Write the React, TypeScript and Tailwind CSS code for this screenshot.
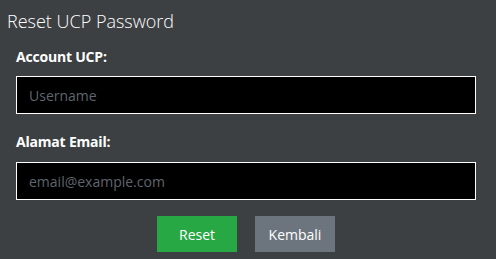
import React from 'react';

const App = () => {
  return (
    <div className="min-h-[259px] w-[496px] bg-[#3d4043] pl-[7px] pr-[20px] pt-[9px] font-['Open_Sans',sans-serif] text-white">
      {/* Header */}
      <h1 className="text-[18px] leading-[24px] font-light">Reset UCP Password</h1>

      <form className="mt-[14px] pl-[9px]" onSubmit={e => e.preventDefault()}>
        <label className="block text-[14px] leading-[20px] font-bold tracking-[-0.2px]">Account UCP:</label>
        <input
          type="text"
          placeholder="Username"
          className="mt-[9px] block h-[38px] w-[460px] border border-white bg-black px-[12px] text-[14px] text-white outline-none placeholder:text-[#5f666d]"
        />

        <label className="mt-[18px] block text-[14px] leading-[20px] font-bold tracking-[-0.2px]">Alamat Email:</label>
        <input
          type="email"
          placeholder="email@example.com"
          className="mt-[10px] block h-[38px] w-[460px] border border-white bg-black px-[12px] text-[14px] text-white outline-none placeholder:text-[#5f666d]"
        />

        <div className="mt-[16px] flex w-[460px] justify-center gap-[18px]">
          <button type="submit" className="h-[36px] w-[80px] bg-[#28a745] text-[14px]">Reset</button>
          <button type="button" className="h-[36px] w-[80px] bg-[#6c757d] text-[14px]">Kembali</button>
        </div>
      </form>
    </div>
  );
};

export default App;
